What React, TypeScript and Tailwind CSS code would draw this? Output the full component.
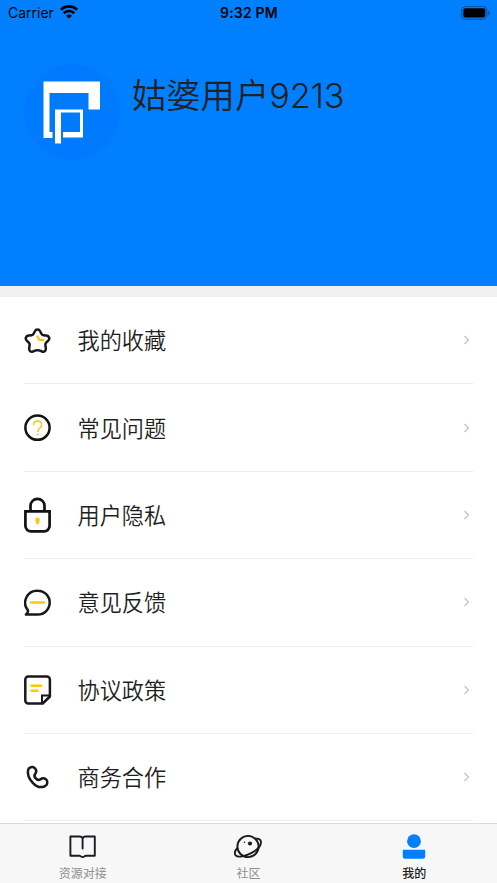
import React from 'react'

interface MenuItem {
  label: string
  icon: React.ReactNode
}

interface TabItem {
  label: string
  icon: React.ReactNode
  active?: boolean
}

const StarIcon = () => (
  <svg width="28" height="28" viewBox="0 0 28 28" fill="none">
    <path
      d="M10.900 4.200c1-2.200 4.200-2.200 5.200 0l1.300 2.600c.4.800 1.100 1.300 2 1.400l2.900.4c2.900.4 3.900 3 1.900 5l-2 2.100c-.7.700-.9 1.500-.8 2.400l.4 3.200c.4 2.800-1.700 4.100-4.100 3l-2.800-.9c-.9-.3-1.900-.3-2.800 0l-2.800.9c-2.400 1.100-4.500-.2-4.100-3l.4-3.200c.1-.9-.1-1.700-.8-2.400l-2-2.100c-2-2-1-4.600 1.900-5l2.900-.4c.9-.1 1.600-.6 2-1.400z"
      stroke="#18191b"
      strokeWidth="2.500"
      strokeLinejoin="round"
    />
    <path d="M13 8.800l2.200 4 4.800.4" stroke="#ffc60a" strokeWidth="2.300" strokeLinejoin="round" />
  </svg>
)

const QuestionIcon = () => (
  <svg width="28" height="28" viewBox="0 0 28 28" fill="none">
    <circle cx="13.500" cy="13.700" r="12.100" stroke="#111214" strokeWidth="2.500" />
    <path d="M9.600 11.200c0-2.500 1.700-4.200 4-4.200s4 1.600 4 3.900c0 3.200-3.900 3.500-3.900 7" stroke="#ffc60a" strokeWidth="1.500" />
    <circle cx="13.600" cy="20.500" r="1" fill="#ffc60a" />
  </svg>
)

const LockIcon = () => (
  <svg width="28" height="36" viewBox="0 0 28 36" fill="none">
    <path d="M6.500 14.500V8.800a7 7 0 0 1 14 0v5.700" stroke="#111214" strokeWidth="2.700" />
    <path d="M1.400 14.300h24.200v14.500a5.500 5.500 0 0 1-5.500 5.500H6.900a5.500 5.500 0 0 1-5.500-5.500z" stroke="#111214" strokeWidth="2.700" />
    <path d="M13.500 20.600a2.200 2.200 0 0 1 2.200 2.300c0 1.400-1 1.900-1 4.300h-2.400c0-2.400-1-2.900-1-4.300a2.200 2.200 0 0 1 2.200-2.300z" fill="#ffc60a" />
  </svg>
)

const FeedbackIcon = () => (
  <svg width="28" height="28" viewBox="0 0 28 28" fill="none">
    <path
      d="M13.800 1.700a11.900 11.900 0 1 1 0 23.800H1.900c1.700-1.200 2.400-2.600 2-4.200A12 12 0 0 1 13.800 1.700z"
      stroke="#18191b"
      strokeWidth="2.500"
      strokeLinejoin="round"
    />
    <path d="M7 13.500h13.200" stroke="#ffc60a" strokeWidth="2.400" strokeLinecap="round" />
  </svg>
)

const PolicyIcon = () => (
  <svg width="28" height="30" viewBox="0 0 28 30" fill="none">
    <path d="M4.300 1.500h18.600a3 3 0 0 1 3 3V21.500l-7.200 7H4.300a3 3 0 0 1-3-3V4.500a3 3 0 0 1 3-3z" stroke="#18191b" strokeWidth="2.500" strokeLinejoin="round" />
    <path d="M18 28v-7.500h7.500" stroke="#18191b" strokeWidth="2" />
    <path d="M7.500 10.800h9.500M7.500 15.800h6" stroke="#ffc60a" strokeWidth="2.500" strokeLinecap="round" />
  </svg>
)

const PhoneIcon = () => (
  <svg width="28" height="28" viewBox="0 0 28 28" fill="none">
    <path
      d="M4 6.200c.5-3 4.500-4.200 6.800-2.100 1.900 1.800 1.700 4 .3 5.800-1.200 1.500-.8 3 .8 4.600 1.600 1.600 3.100 2 4.600.8 1.800-1.400 4.300-1.400 5.800.3 2.100 2.300.9 5.900-2 6.900-3.600 1.300-8 .1-11.500-3.700C4.900 14.700 3.300 10.300 4 6.200z"
      stroke="#18191b"
      strokeWidth="2.500"
      strokeLinejoin="round"
    />
  </svg>
)

const BookIcon = () => (
  <svg width="28" height="24" viewBox="0 0 28 24" fill="none" stroke="#1b1c1e" strokeWidth="1.900" strokeLinejoin="round" strokeLinecap="round">
    <path d="M13.600 3.200C13 2 12 1.500 10.700 1.500H1.400v19.300h9c1.500 0 1.300 1.300 3.200 1.300s1.700-1.300 3.200-1.300h9V1.500h-9.300c-1.300 0-2.300.5-2.900 1.700z" />
    <path d="M13.600 3.500v10" />
  </svg>
)

const PlanetIcon = () => (
  <svg width="28" height="24" viewBox="0 0 28 24" fill="none" stroke="#1b1c1e" strokeWidth="1.900" strokeLinecap="round">
    <circle cx="14" cy="11.500" r="10.600" />
    <path d="M21.500 3.700c2.800-.4 5 .5 5.400 2.700.6 4-3.500 8.400-9.300 11.500-6 3.300-13.700 5-15.900 2.400-1.500-1.900-.7-4.700 1.300-7" />
    <circle cx="16" cy="8.500" r="2.100" fill="#1b1c1e" stroke="none" />
    <circle cx="10.500" cy="7.200" r=".8" fill="#1b1c1e" stroke="none" />
  </svg>
)

const UserIcon = () => (
  <svg width="24" height="26" viewBox="0 0 24 26" fill="#0080ff">
    <circle cx="12" cy="7.200" r="6.900" />
    <path d="M2 15.800h20c.8 0 1.200.5 1.200 1.300v5.200a2.500 2.500 0 0 1-2.500 2.500H3.300a2.500 2.500 0 0 1-2.500-2.500v-5.200c0-.8.400-1.300 1.200-1.300z" />
  </svg>
)

const menuItems: MenuItem[] = [
  { label: '我的收藏', icon: <StarIcon /> },
  { label: '常见问题', icon: <QuestionIcon /> },
  { label: '用户隐私', icon: <LockIcon /> },
  { label: '意见反馈', icon: <FeedbackIcon /> },
  { label: '协议政策', icon: <PolicyIcon /> },
  { label: '商务合作', icon: <PhoneIcon /> }
]

const tabs: TabItem[] = [
  { label: '资源对接', icon: <BookIcon /> },
  { label: '社区', icon: <PlanetIcon /> },
  { label: '我的', icon: <UserIcon />, active: true }
]

const StatusBar = () => (
  <div className="grid h-[26px] grid-cols-[1fr_auto_1fr] items-center pl-[8px] pr-[7px] font-['Inter',sans-serif] text-black">
    <div className="mb-px flex items-center gap-[6px] text-[14px]">
      <span>Carrier</span>
      <svg width="18" height="14" viewBox="0 0 18 14" fill="none" stroke="#000" strokeWidth="2.600" className="mb-px">
        <path d="M.9 4.700a11.600 11.600 0 0 1 16.200 0" />
        <path d="M3.700 8.200a7.600 7.600 0 0 1 10.600 0" />
        <path d="M9 13.500L6 10.800a4.200 4.200 0 0 1 6 0z" fill="#000" stroke="none" />
      </svg>
    </div>
    <div className="mb-px text-center text-[14px] font-semibold tracking-[0.200px]">9:32 PM</div>
    <div className="mb-px flex justify-end">
      <svg width="29" height="14" viewBox="0 0 29 14">
        <rect x=".6" y=".6" width="25.300" height="12.600" rx="3.600" fill="none" stroke="#000" strokeOpacity=".4" />
        <rect x="2.300" y="2.300" width="22" height="9.300" rx="2" fill="#000" />
        <path d="M27.300 4.700c1.700.8 1.700 3.800 0 4.600z" fill="#000" fillOpacity=".5" />
      </svg>
    </div>
  </div>
)

const Avatar = () => (
  <div className="h-24 w-24 overflow-hidden rounded-full bg-[#007aff]">
    <svg width="96" height="96" viewBox="0 0 96 96" fill="#fff">
      <path d="M19.500 17.500H76v28H64.500v-16.500h-39V68h3v6h-9z" />
      <path fillRule="evenodd" d="M31 45.500h28V73.500H39V68h17V48.500H37V79.500h-6z" />
    </svg>
  </div>
)

const MenuRow: React.FC<{ item: MenuItem }> = ({ item }) => (
  <div className="mx-6 flex h-[87.400px] shrink-0 items-center border-b border-[#ededed]">
    <div className="flex w-[53.500px] items-center pt-px">{item.icon}</div>
    <span className="flex-1 pt-1 text-[22.200px] leading-8 font-[350] text-[#1f1f1f]">{item.label}</span>
    <svg width="10" height="10" viewBox="0 0 10 10" fill="none" className="mr-px">
      <path d="M2.500 1l4 4-4 4" stroke="#c4c4c4" strokeWidth="1.300" />
    </svg>
  </div>
)

export default function App() {
  return (
    <div className="flex h-[883px] w-[497px] flex-col overflow-hidden bg-white font-['Liberation_Sans','Noto_Sans_CJK_SC',sans-serif]">
      <header className="h-[286px] shrink-0 bg-[#0080ff]">
        <StatusBar />
        <div className="flex gap-3 pt-[38px] pl-6">
          <Avatar />
          <h1 className="pt-[8px] text-[34.300px] leading-[48px] font-[350] text-[#222]">
            姑婆用户<span className="font-['Inter',sans-serif] font-light tracking-[-0.2px]">9213</span>
          </h1>
        </div>
      </header>
      <div className="h-[11px] shrink-0 bg-[#f1f1f1]" />

      <main className="flex min-h-0 flex-1 flex-col overflow-hidden">
        {menuItems.map((item) => (
          <MenuRow key={item.label} item={item} />
        ))}
      </main>

      <nav className="grid h-[60px] shrink-0 grid-cols-3 border-t border-[#dcdcdc] bg-[#f7f7f7]">
        {tabs.map((tab) => (
          <div key={tab.label} className="flex flex-col items-center pt-[9px]">
            <div className="flex h-[28px] items-center">{tab.icon}</div>
            <span
              className={
                tab.active
                  ? 'mt-[4px] text-[12px] leading-[18px] font-medium text-[#1b1b1b]'
                  : 'mt-[4px] text-[12px] leading-[18px] text-[#8e8e90]'
              }
            >
              {tab.label}
            </span>
          </div>
        ))}
      </nav>
    </div>
  )
}
